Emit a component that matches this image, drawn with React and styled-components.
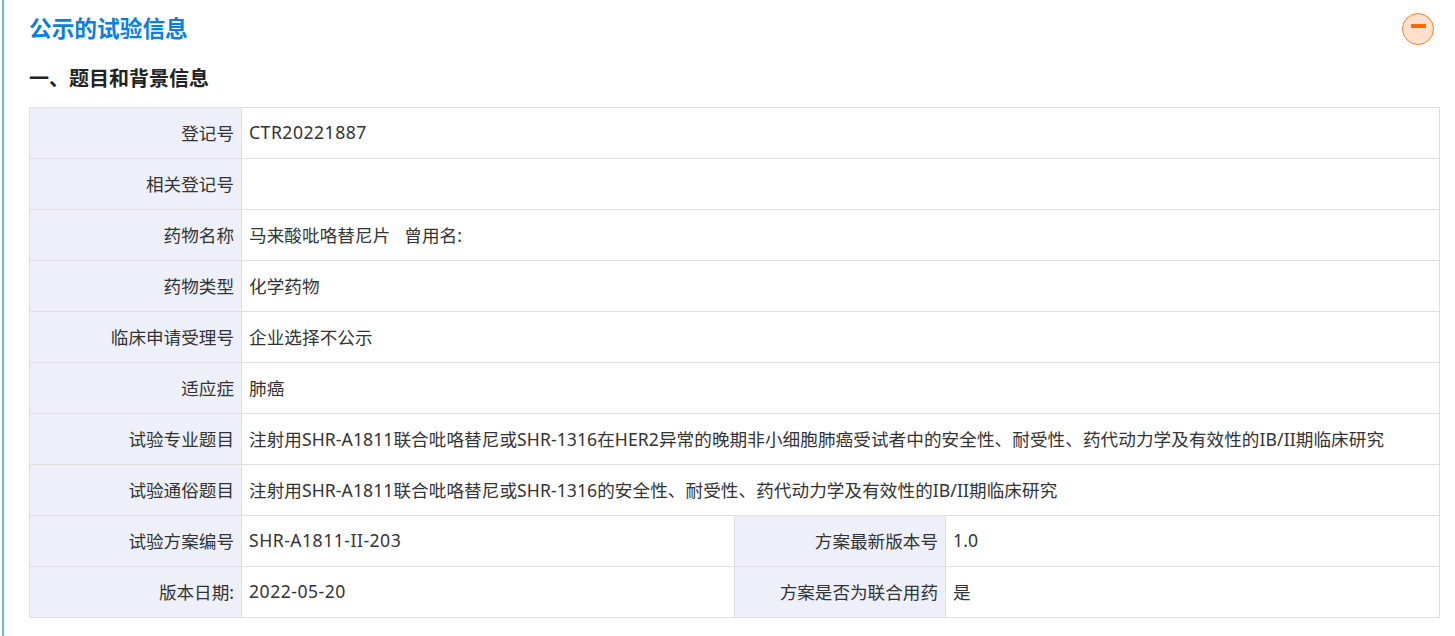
import React from "react";
import styled, { createGlobalStyle } from "styled-components";

const GlobalStyle = createGlobalStyle`
  html, body {
    margin: 0;
    padding: 0;
    background: #fff;
    overflow: hidden;
  }
  body {
    font-family: "Noto Sans", "Noto Sans CJK SC", sans-serif;
    color: #333;
  }
`;

const rows = [
  { label: "登记号", value: "CTR20221887", latin: true },
  { label: "相关登记号", value: "" },
  { label: "药物名称", value: "马来酸吡咯替尼片\u00a0\u00a0\u00a0曾用名:" },
  { label: "药物类型", value: "化学药物" },
  { label: "临床申请受理号", value: "企业选择不公示" },
  { label: "适应症", value: "肺癌" },
  {
    label: "试验专业题目",
    value:
      "注射用SHR-A1811联合吡咯替尼或SHR-1316在HER2异常的晚期非小细胞肺癌受试者中的安全性、耐受性、药代动力学及有效性的IB/II期临床研究",
  },
  {
    label: "试验通俗题目",
    value:
      "注射用SHR-A1811联合吡咯替尼或SHR-1316的安全性、耐受性、药代动力学及有效性的IB/II期临床研究",
  },
  {
    label: "试验方案编号",
    value: "SHR-A1811-II-203",
    latin: true,
    label2: "方案最新版本号",
    value2: "1.0",
  },
  {
    label: "版本日期:",
    value: "2022-05-20",
    latin: true,
    label2: "方案是否为联合用药",
    value2: "是",
  },
];

function App() {
  return (
    <Page>
      <GlobalStyle />
      <Header>
        <Title>公示的试验信息</Title>
        <Toggle type="button" aria-label="收起">
          <Minus />
        </Toggle>
      </Header>
      <SubTitle>一、题目和背景信息</SubTitle>
      <InfoTable>
        <colgroup>
          <col style={{ width: 212 }} />
          <col style={{ width: 493 }} />
          <col style={{ width: 211 }} />
          <col />
        </colgroup>
        <tbody>
          {rows.map((row) => (
            <tr key={row.label}>
              <LabelCell>{row.label}</LabelCell>
              {row.label2 ? (
                <>
                  <ValueCell $latin={row.latin}>{row.value}</ValueCell>
                  <LabelCell>{row.label2}</LabelCell>
                  <ValueCell>{row.value2}</ValueCell>
                </>
              ) : (
                <ValueCell colSpan={3} $latin={row.latin}>
                  {row.value}
                </ValueCell>
              )}
            </tr>
          ))}
        </tbody>
      </InfoTable>
    </Page>
  );
}

export default App;

const Page = styled.div`
  box-sizing: border-box;
  width: 1453px;
  height: 636px;
  margin-left: 2px;
  border-left: 2px solid #5bbcdf;
  padding: 0 15px 0 25px;
`;

const Header = styled.div`
  display: flex;
  align-items: center;
  justify-content: space-between;
  box-sizing: border-box;
  height: 59px;
  padding-bottom: 2px;
`;

const Title = styled.h2`
  margin: 0;
  font-size: 22.7px;
  font-weight: 700;
  line-height: 57px;
  color: #0a7fdc;
`;

const Toggle = styled.button`
  display: flex;
  align-items: center;
  justify-content: center;
  box-sizing: border-box;
  width: 32px;
  height: 32px;
  margin: 0 6px 0 auto;
  padding: 0 0 6px;
  border: 1px solid #ff7f27;
  border-radius: 50%;
  background: #ffe0cc;
`;

const Minus = styled.span`
  display: block;
  width: 15px;
  height: 4px;
  background: #ff6a00;
`;

const SubTitle = styled.h3`
  margin: 0;
  font-size: 20px;
  font-weight: 700;
  line-height: 40px;
  height: 48px;
  color: #222;
`;

const InfoTable = styled.table`
  width: 1411px;
  table-layout: fixed;
  border-collapse: collapse;
  font-size: 17.6px;
  color: #333;

  td {
    height: 51px;
    box-sizing: border-box;
    border: 1px solid #dfdfdf;
    white-space: nowrap;
  }
`;

const LabelCell = styled.td`
  padding: 0 7px 2px 8px;
  text-align: right;
  background: #edf0f9;
`;

const ValueCell = styled.td`
  padding: 0 7px 2px;
  text-align: left;
  letter-spacing: ${(props) => (props.$latin ? "0.5px" : "0.07px")};
  background: #fff;
`;
